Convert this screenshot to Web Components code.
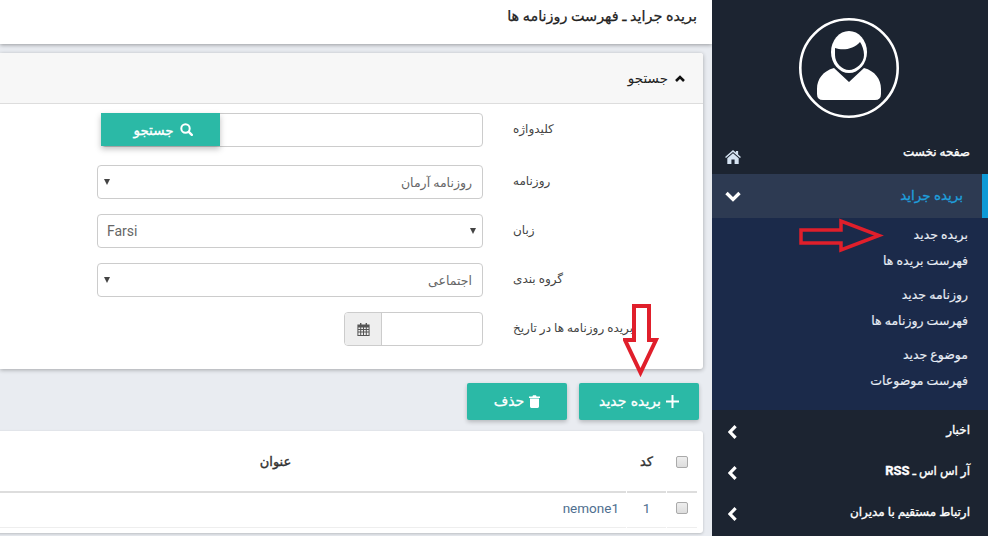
<!DOCTYPE html>
<html lang="fa">
<head>
<meta charset="utf-8">
<title>بریده جراید</title>
<style>
	html, body { margin: 0; height: 100%; overflow: hidden; }
	body { font-family: Roboto, "DejaVu Sans", sans-serif; font-size: 13px; }
	b { font-size: 13px; }
</style>
</head>
<body>
<admin-shell>
	<page-header>بریده جراید ـ فهرست روزنامه ها</page-header>
	<search-panel heading="جستجو">
		<form-row label="کلیدواژه" gap="18">
			<search-input>جستجو</search-input>
		</form-row>
		<form-row label="روزنامه" gap="15"><fake-select dir="rtl">روزنامه آرمان</fake-select></form-row>
		<form-row label="زبان" gap="15"><fake-select dir="ltr">Farsi</fake-select></form-row>
		<form-row label="گروه بندی" gap="15"><fake-select dir="rtl">اجتماعی</fake-select></form-row>
		<form-row label="بریده روزنامه ها در تاریخ"><date-input></date-input></form-row>
	</search-panel>
	<action-bar>
		<teal-button icon="plus" wide>بریده جدید</teal-button>
		<teal-button icon="trash">حذف</teal-button>
	</action-bar>
	<clip-table></clip-table>

	<side-bar slot="side">
		<side-item icon="home" style="height:42px" top>صفحه نخست</side-item>
		<side-item icon="down" active>بریده جراید</side-item>
		<sub-menu>
			<sub-link>بریده جدید</sub-link>
			<sub-link>فهرست بریده ها</sub-link>
			<sub-link group>روزنامه جدید</sub-link>
			<sub-link>فهرست روزنامه ها</sub-link>
			<sub-link group>موضوع جدید</sub-link>
			<sub-link>فهرست موضوعات</sub-link>
		</sub-menu>
		<side-item icon="left">اخبار</side-item>
		<side-item icon="left">آر اس اس ـ <b>RSS</b></side-item>
		<side-item icon="left">ارتباط مستقیم با مدیران</side-item>
	</side-bar>

	<red-arrow slot="overlay" dir-name="right"></red-arrow>
	<red-arrow slot="overlay" dir-name="down"></red-arrow>
</admin-shell>

<script>
const ICONS = {
	home: '<svg width="16" height="14" viewBox="0 0 17 15"><path fill="#d5e3f2" d="M8.5 0 L11.6 2.7 V1 H14 V4.8 L17 7.4 L16 8.6 L8.5 2.2 L1 8.6 L0 7.4 Z M8.5 3.6 L14.6 8.8 V15 H10.2 V10.2 H6.8 V15 H2.4 V8.8 Z"/></svg>',
	down: '<svg width="16" height="11" viewBox="0 0 16 11"><path fill="none" stroke="#fff" stroke-width="3.4" d="M1.5 2 L8 8.4 L14.5 2"/></svg>',
	left: '<svg width="9" height="14" viewBox="0 0 9 14"><path fill="none" stroke="#fff" stroke-width="3.2" d="M7.6 1.2 L2 7 L7.6 12.8"/></svg>',
	up: '<svg width="10" height="7" viewBox="0 0 10 7"><path fill="none" stroke="#111" stroke-width="2.6" d="M1 6 L5 2 L9 6"/></svg>',
	search: '<svg width="13" height="13" viewBox="0 0 13 13"><circle cx="5.5" cy="5.5" r="4.2" fill="none" stroke="#fff" stroke-width="2"/><path stroke="#fff" stroke-width="2.4" stroke-linecap="round" d="M8.8 8.8 L11.8 11.8"/></svg>',
	plus: '<svg width="13" height="13" viewBox="0 0 13 13"><path fill="#fff" d="M5.5 0 H7.5 V5.5 H13 V7.5 H7.5 V13 H5.5 V7.5 H0 V5.5 H5.5 Z"/></svg>',
	trash: '<svg width="11" height="13" viewBox="0 0 11 13"><path fill="#fff" d="M0 1.6 H3.4 L4 .3 H7 L7.6 1.6 H11 V3 H0 Z M1 3.6 H10 V11.6 Q10 13 8.6 13 H2.4 Q1 13 1 11.6 Z"/></svg>',
	calendar: '<svg width="13" height="13" viewBox="0 0 13 13"><path fill="#555" d="M3 0 H4.4 V1.4 H8.6 V0 H10 V1.4 H12.6 V13 H.4 V1.4 H3 Z M1.4 4.4 V6 H3.2 V4.4 Z M4.2 4.4 V6 H6 V4.4 Z M7 4.4 V6 H8.8 V4.4 Z M9.8 4.4 V6 H11.6 V4.4 Z M1.4 7 V8.6 H3.2 V7 Z M4.2 7 V8.6 H6 V7 Z M7 7 V8.6 H8.8 V7 Z M9.8 7 V8.6 H11.6 V7 Z M1.4 9.6 V12 H3.2 V9.6 Z M4.2 9.6 V12 H6 V9.6 Z M7 9.6 V12 H8.8 V9.6 Z M9.8 9.6 V12 H11.6 V9.6 Z"/></svg>'
};

// little helper so each class stays short
class Base extends HTMLElement {
	render(html) {
		if(!this.shadowRoot) this.attachShadow({ mode: 'open' });
		this.shadowRoot.innerHTML = html;
	}
}

class AdminShell extends Base {
	connectedCallback() {
		this.render(`
			<style>
				:host { display: flex; width: 988px; height: 536px; position: relative; overflow: hidden; background: #e9ecf1; }
				.main { width: 712px; height: 536px; overflow: hidden; flex: none; }
				.side { width: 276px; flex: none; }
			</style>
			<div class="main"><slot></slot></div>
			<div class="side"><slot name="side"></slot></div>
			<slot name="overlay"></slot>
		`);
	}
}

class PageHeader extends Base {
	connectedCallback() {
		this.render(`
			<style>
				:host { display: flex; align-items: center; height: 44px; box-sizing: border-box; padding: 0 15px 12px; background: #fff; direction: rtl;
					font-size: 14.4px; color: #222; -webkit-text-stroke: .25px #222; box-shadow: 0 1px 4px rgba(0,0,0,.35); }
			</style>
			<slot></slot>
		`);
	}
}

class SearchPanel extends Base {
	connectedCallback() {
		this.render(`
			<style>
				:host { display: block; margin: 9px 9px 0 0; background: #fff; border-radius: 0 3px 3px 0; box-shadow: 0 1px 4px rgba(0,0,0,.3); }
				.head { height: 51px; box-sizing: border-box; display: flex; align-items: center; gap: 7px; direction: rtl; padding: 0 18px 0;
					background: #f7f7f7; border-bottom: 1px solid #ddd; font-size: 13.5px; color: #222; border-radius: 0 3px 0 0; }
				.body { padding: 9px 0 23px; }
			</style>
			<div class="head">${ICONS.up}<span>${this.getAttribute('heading')}</span></div>
			<div class="body"><slot></slot></div>
		`);
	}
}

class FormRow extends Base {
	connectedCallback() {
		const gap = this.getAttribute('gap') || 0;
		this.render(`
			<style>
				:host { display: grid; grid-template-columns: 386px 1fr; margin: 0 0 ${gap}px 97px; align-items: center; height: 34px; }
				.label { padding: 0 0 2px 30px; text-align: left; direction: rtl; font-size: 12px; color: #444; white-space: nowrap; }
			</style>
			<slot></slot>
			<div class="label">${this.getAttribute('label')}</div>
		`);
	}
}

class SearchInput extends Base {
	connectedCallback() {
		this.render(`
			<style>
				:host { display: flex; height: 34px; margin-left: 4px; box-sizing: border-box; border: 1px solid #ccc; border-radius: 4px; background: #fff; }
				.btn { width: 119px; height: 33px; padding-left: 5px; box-sizing: border-box; display: flex; align-items: center; justify-content: center; gap: 6px; direction: rtl;
					background: #2bb9a6; color: #fff; font-size: 13.5px; -webkit-text-stroke: .3px #fff; box-shadow: 0 3px 6px rgba(0,0,0,.25); margin-top: -1px; margin-left: -1px; }
			</style>
			<div class="btn">${ICONS.search}<span><slot></slot></span></div>
		`);
	}
}

class FakeSelect extends Base {
	connectedCallback() {
		const rtl = this.getAttribute('dir') === 'rtl';
		this.render(`
			<style>
				:host { display: flex; flex-direction: row; justify-content: space-between; align-items: center; height: 34px; box-sizing: border-box; direction: ${rtl ? 'rtl' : 'ltr'};
					padding: 0 ${rtl ? '10px' : '6px'} 0 ${rtl ? '6px' : '9px'}; border: 1px solid #ccc; border-radius: 4px; background: #fff; color: #666; font-size: ${rtl ? 12.5 : 14}px; }
				.arrow { width: 0; height: 0; border: 3.5px solid transparent; border-top: 6px solid #444; border-bottom: 0; }
				span:first-child { ${rtl ? '' : 'margin-top: -2px; letter-spacing: .2px;'} }
			</style>
			<span><slot></slot></span>
			<span class="arrow"></span>
		`);
	}
}

class DateInput extends Base {
	connectedCallback() {
		this.render(`
			<style>
				:host { display: flex; justify-self: end; width: 139px; height: 34px; box-sizing: border-box; border: 1px solid #ccc; border-radius: 4px; overflow: hidden; background: #fff; }
				.addon { width: 36px; display: flex; align-items: center; justify-content: center; background: #eee; border-right: 1px solid #ccc; }
			</style>
			<div class="addon">${ICONS.calendar}</div>
		`);
	}
}

class ActionBar extends Base {
	connectedCallback() {
		this.render(`
			<style>
				:host { display: flex; flex-direction: row-reverse; gap: 12px; height: 37px; margin-top: 14px; padding-right: 13px; }
			</style>
			<slot></slot>
		`);
	}
}

class TealButton extends Base {
	connectedCallback() {
		const wide = this.hasAttribute('wide');
		this.render(`
			<style>
				:host { display: flex; align-items: center; justify-content: center; gap: 5px; direction: rtl; width: ${wide ? 120 : 100}px; height: 37px; box-sizing: border-box;
					background: #2bb9a6; color: #fff; font-size: 14px; word-spacing: 1px; -webkit-text-stroke: .3px #fff; border-radius: 2px; box-shadow: 0 2px 4px rgba(0,0,0,.22); }
				span { margin-top: -2px; }
			</style>
			${ICONS[this.getAttribute('icon')]}<span><slot></slot></span>
		`);
	}
}

class ClipTable extends Base {
	connectedCallback() {
		this.render(`
			<style>
				:host { display: block; margin: 11px 9px 0 -75px; background: #fff; height: 102px; padding-right: 6px; box-sizing: border-box; box-shadow: 0 1px 3px rgba(0,0,0,.2); border-radius: 3px; }
				.t { display: grid; grid-template-columns: 1fr 39px 30px; column-gap: 1px; }
				.c { display: flex; align-items: center; justify-content: center; }
				.h { height: 60px; border-bottom: 2px solid #ddd; font-size: 13px; -webkit-text-stroke: .4px #333; color: #333; direction: rtl; }
				.r { height: 35px; padding-bottom: 4px; box-sizing: border-box; border-bottom: 1px solid #eee; color: #4f6f8f; font-size: 13.5px; }
				.name { justify-content: flex-end; padding-right: 7px; }
				.box { width: 12px; height: 12px; box-sizing: border-box; border: 1px solid #aaa; border-radius: 2px; background: linear-gradient(#eee, #ddd); }
				.h .box { margin-top: 2px; }
			</style>
			<div class="t">
				<div class="c h">عنوان</div><div class="c h">کد</div><div class="c h"><span class="box"></span></div>
				<div class="c r name">nemone1</div><div class="c r">1</div><div class="c r"><span class="box"></span></div>
			</div>
		`);
	}
}

class SideBar extends Base {
	connectedCallback() {
		this.render(`
			<style>
				:host { display: block; height: 536px; background: #1c2431; }
				.avatar { height: 132px; display: flex; justify-content: center; padding: 18px 2px 0 0; box-sizing: border-box; }
			</style>
			<div class="avatar">
				<svg width="100" height="100" viewBox="0 0 100 100">
					<circle cx="50" cy="50" r="48.7" fill="none" stroke="#fff" stroke-width="2.6"/>
					<path fill="#fff" d="M35 50 L50 64 L65 50 C76 53 82 61 82 71 V76 Q82 82 76 82 H24 Q18 82 18 76 V71 C18 61 24 53 35 50Z"/>
					<ellipse cx="50" cy="34" rx="19.5" ry="22.5" fill="#1c2431"/>
					<ellipse cx="50" cy="34" rx="18" ry="21" fill="#fff"/>
					<path fill="#1c2431" d="M36 30 C44 33 55 31 61 24 C63 27 65 32 65 37 C65 45 57 52 50 52 C43 52 36 45 36 37 Z"/>
				</svg>
			</div>
			<slot></slot>
		`);
	}
}

class SideItem extends Base {
	connectedCallback() {
		const active = this.hasAttribute('active');
		const top = this.hasAttribute('top');
		this.render(`
			<style>
				:host { display: flex; align-items: center; justify-content: space-between; direction: rtl; box-sizing: border-box; height: ${active ? 44 : 41}px; padding: 0 18px 0 ${top ? 13 : 16}px;
					color: #fff; font-size: 12px; -webkit-text-stroke: .35px #fff;
					${active ? 'background: #2d3a52; border-right: 6px solid #0d99d6; color: #1f9fdc; -webkit-text-stroke: .3px #1f9fdc; padding: 0 19px 0 13px; font-size: 13.5px;' : ''} }
				.t { margin-top: ${active ? -2 : -2}px; }
				.i { display: flex; ${top ? 'margin-top: 8px;' : active ? '' : 'margin-top: 2px;'} }
			</style>
			<span class="t"><slot></slot></span>
			<span class="i">${ICONS[this.getAttribute('icon')]}</span>
		`);
	}
}

class SubMenu extends Base {
	connectedCallback() {
		this.render(`
			<style>
				:host { display: block; background: #1b2a4a; padding: 4px 0 16px; height: 192px; box-sizing: border-box; }
			</style>
			<slot></slot>
		`);
	}
}

class SubLink extends Base {
	connectedCallback() {
		const group = this.hasAttribute('group');
		this.render(`
			<style>
				:host { display: flex; align-items: center; direction: rtl; height: 26px; box-sizing: border-box; padding: 0 20px 2px 0; margin-top: ${group ? 8 : 0}px; color: #e8edf5; font-size: 12.5px; -webkit-text-stroke: .15px #e8edf5; }
			</style>
			<slot></slot>
		`);
	}
}

class RedArrow extends Base {
	connectedCallback() {
		const right = this.getAttribute('dir-name') === 'right';
		const pts = right ? '2,13 42,13 42,4 80,18.5 42,33 42,26 2,26' : '11,2 26,2 26,36 33,36 17.5,68.5 2,36 11,36';
		const w = right ? 86 : 36, h = right ? 37 : 75;
		this.render(`
			<style>
				:host { position: absolute; left: ${right ? 799 : 623}px; top: ${right ? 217 : 304}px; width: ${w}px; height: ${h}px; }
				svg { display: block; }
			</style>
			<svg width="${w}" height="${h}" viewBox="0 0 ${w} ${h}"><polygon points="${pts}" fill="none" stroke="#e01f2b" stroke-width="${right ? 3.5 : 4}"/></svg>
		`);
	}
}

customElements.define('admin-shell', AdminShell);
customElements.define('page-header', PageHeader);
customElements.define('search-panel', SearchPanel);
customElements.define('form-row', FormRow);
customElements.define('search-input', SearchInput);
customElements.define('fake-select', FakeSelect);
customElements.define('date-input', DateInput);
customElements.define('action-bar', ActionBar);
customElements.define('teal-button', TealButton);
customElements.define('clip-table', ClipTable);
customElements.define('side-bar', SideBar);
customElements.define('side-item', SideItem);
customElements.define('sub-menu', SubMenu);
customElements.define('sub-link', SubLink);
customElements.define('red-arrow', RedArrow);
</script>
</body>
</html>
